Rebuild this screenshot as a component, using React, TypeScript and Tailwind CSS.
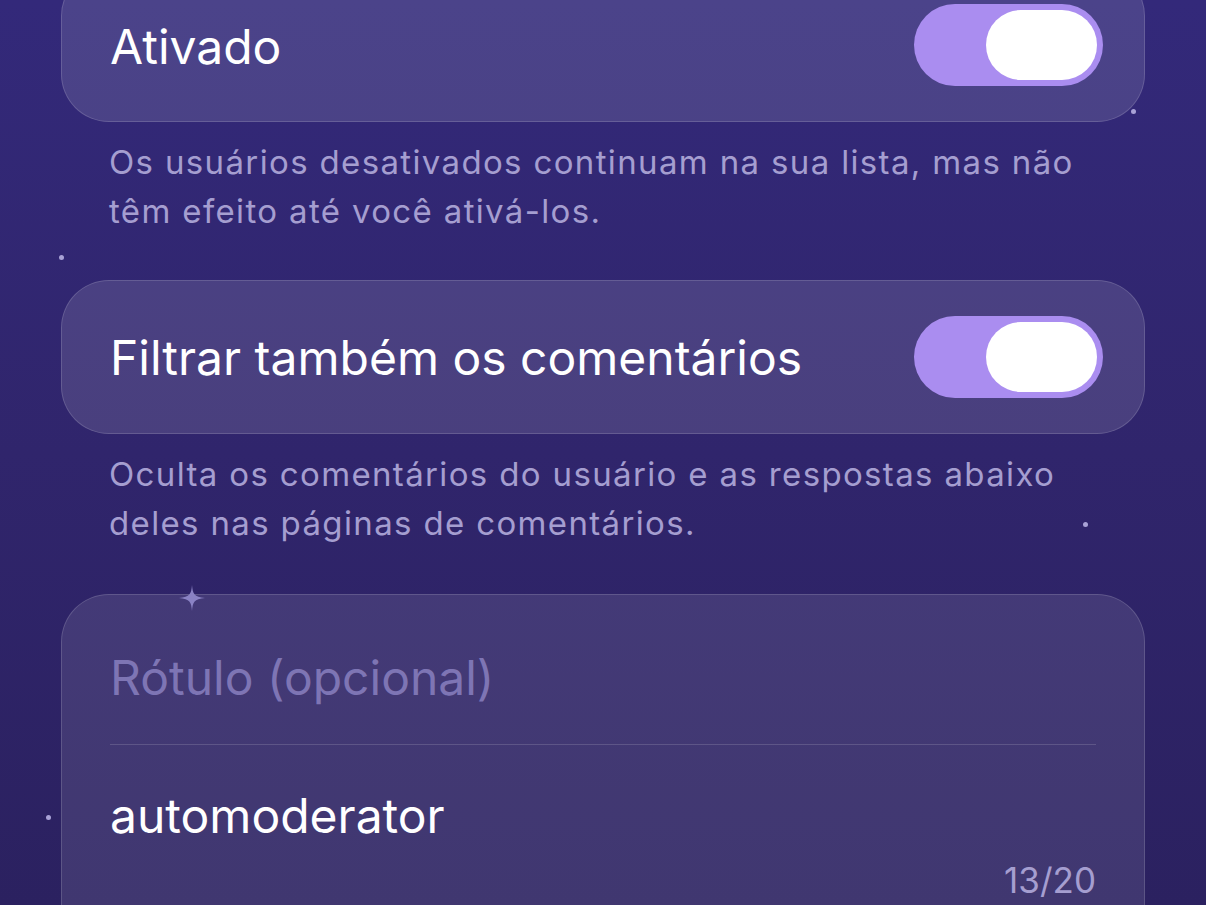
import React from "react";

function Toggle() {
  return (
    <div className="flex h-[82px] w-[189px] shrink-0 items-center justify-end rounded-full bg-[#aa8df0] pr-[6px]">
      <div className="h-[70px] w-[111px] rounded-full bg-white" />
    </div>
  );
}

function Dot({ className }: { className: string }) {
  return <div className={"absolute h-[5px] w-[5px] rounded-full bg-[#a9a2d6] " + className} />;
}

export default function App() {
  return (
    <div
      className="relative h-[905px] w-[1206px] overflow-hidden bg-gradient-to-b from-[#33297a] via-[#30256c] to-[#2b2160]"
      style={{ fontFamily: "Inter, 'Noto Sans', sans-serif" }}
    >
      <div className="flex flex-col px-[61px]">
        <div className="mt-[-32px] flex h-[154px] items-center justify-between rounded-[48px] border border-white/15 bg-white/[0.12] pl-[48px] pr-[41px]">
          <span className="pt-[3px] text-[48px] leading-none text-white">Ativado</span>
          <Toggle />
        </div>
        <p className="pl-[48px] pr-[50px] pt-[16px] pb-[44px] text-[33px] leading-[49px] tracking-[1.35px] text-[#a59ed0]">
          Os usuários desativados continuam na sua lista, mas não têm efeito até você ativá-los.
        </p>
        <div className="flex h-[154px] items-center justify-between rounded-[48px] border border-white/15 bg-white/[0.12] pl-[48px] pr-[41px]">
          <span className="pt-[2px] text-[48px] leading-none text-white">Filtrar também os comentários</span>
          <Toggle />
        </div>
        <p className="pl-[48px] pr-[50px] pt-[16px] pb-[46px] text-[33px] leading-[49px] tracking-[1.35px] text-[#a59ed0]">
          Oculta os comentários do usuário e as respostas abaixo deles nas páginas de comentários.
        </p>
        <div className="flex h-[360px] flex-col rounded-[48px] border border-white/15 bg-white/[0.1] px-[48px]">
          <div className="h-[149px] pt-[56px] text-[48px] leading-[53px] text-[#7e75b4]">
            Rótulo (opcional)
          </div>
          <div className="h-px bg-white/15" />
          <div className="pt-[44px] text-[48px] leading-[53px] text-white">automoderator</div>
          <div className="pt-[20px] text-right text-[35px] leading-[36px] text-[#a59ed0]">13/20</div>
        </div>
      </div>
      <Dot className="left-[1131px] top-[109px]" />
      <Dot className="left-[59px] top-[255px]" />
      <Dot className="left-[1083px] top-[522px]" />
      <Dot className="left-[46px] top-[815px]" />
      <svg className="absolute left-[179px] top-[585px]" width="26" height="26" viewBox="0 0 26 26">
        <path d="M13 0 C13.8 9 15 12 26 13 C15 14 13.8 17 13 26 C12.2 17 11 14 0 13 C11 12 12.2 9 13 0 Z" fill="#8a82c4" />
      </svg>
    </div>
  );
}
